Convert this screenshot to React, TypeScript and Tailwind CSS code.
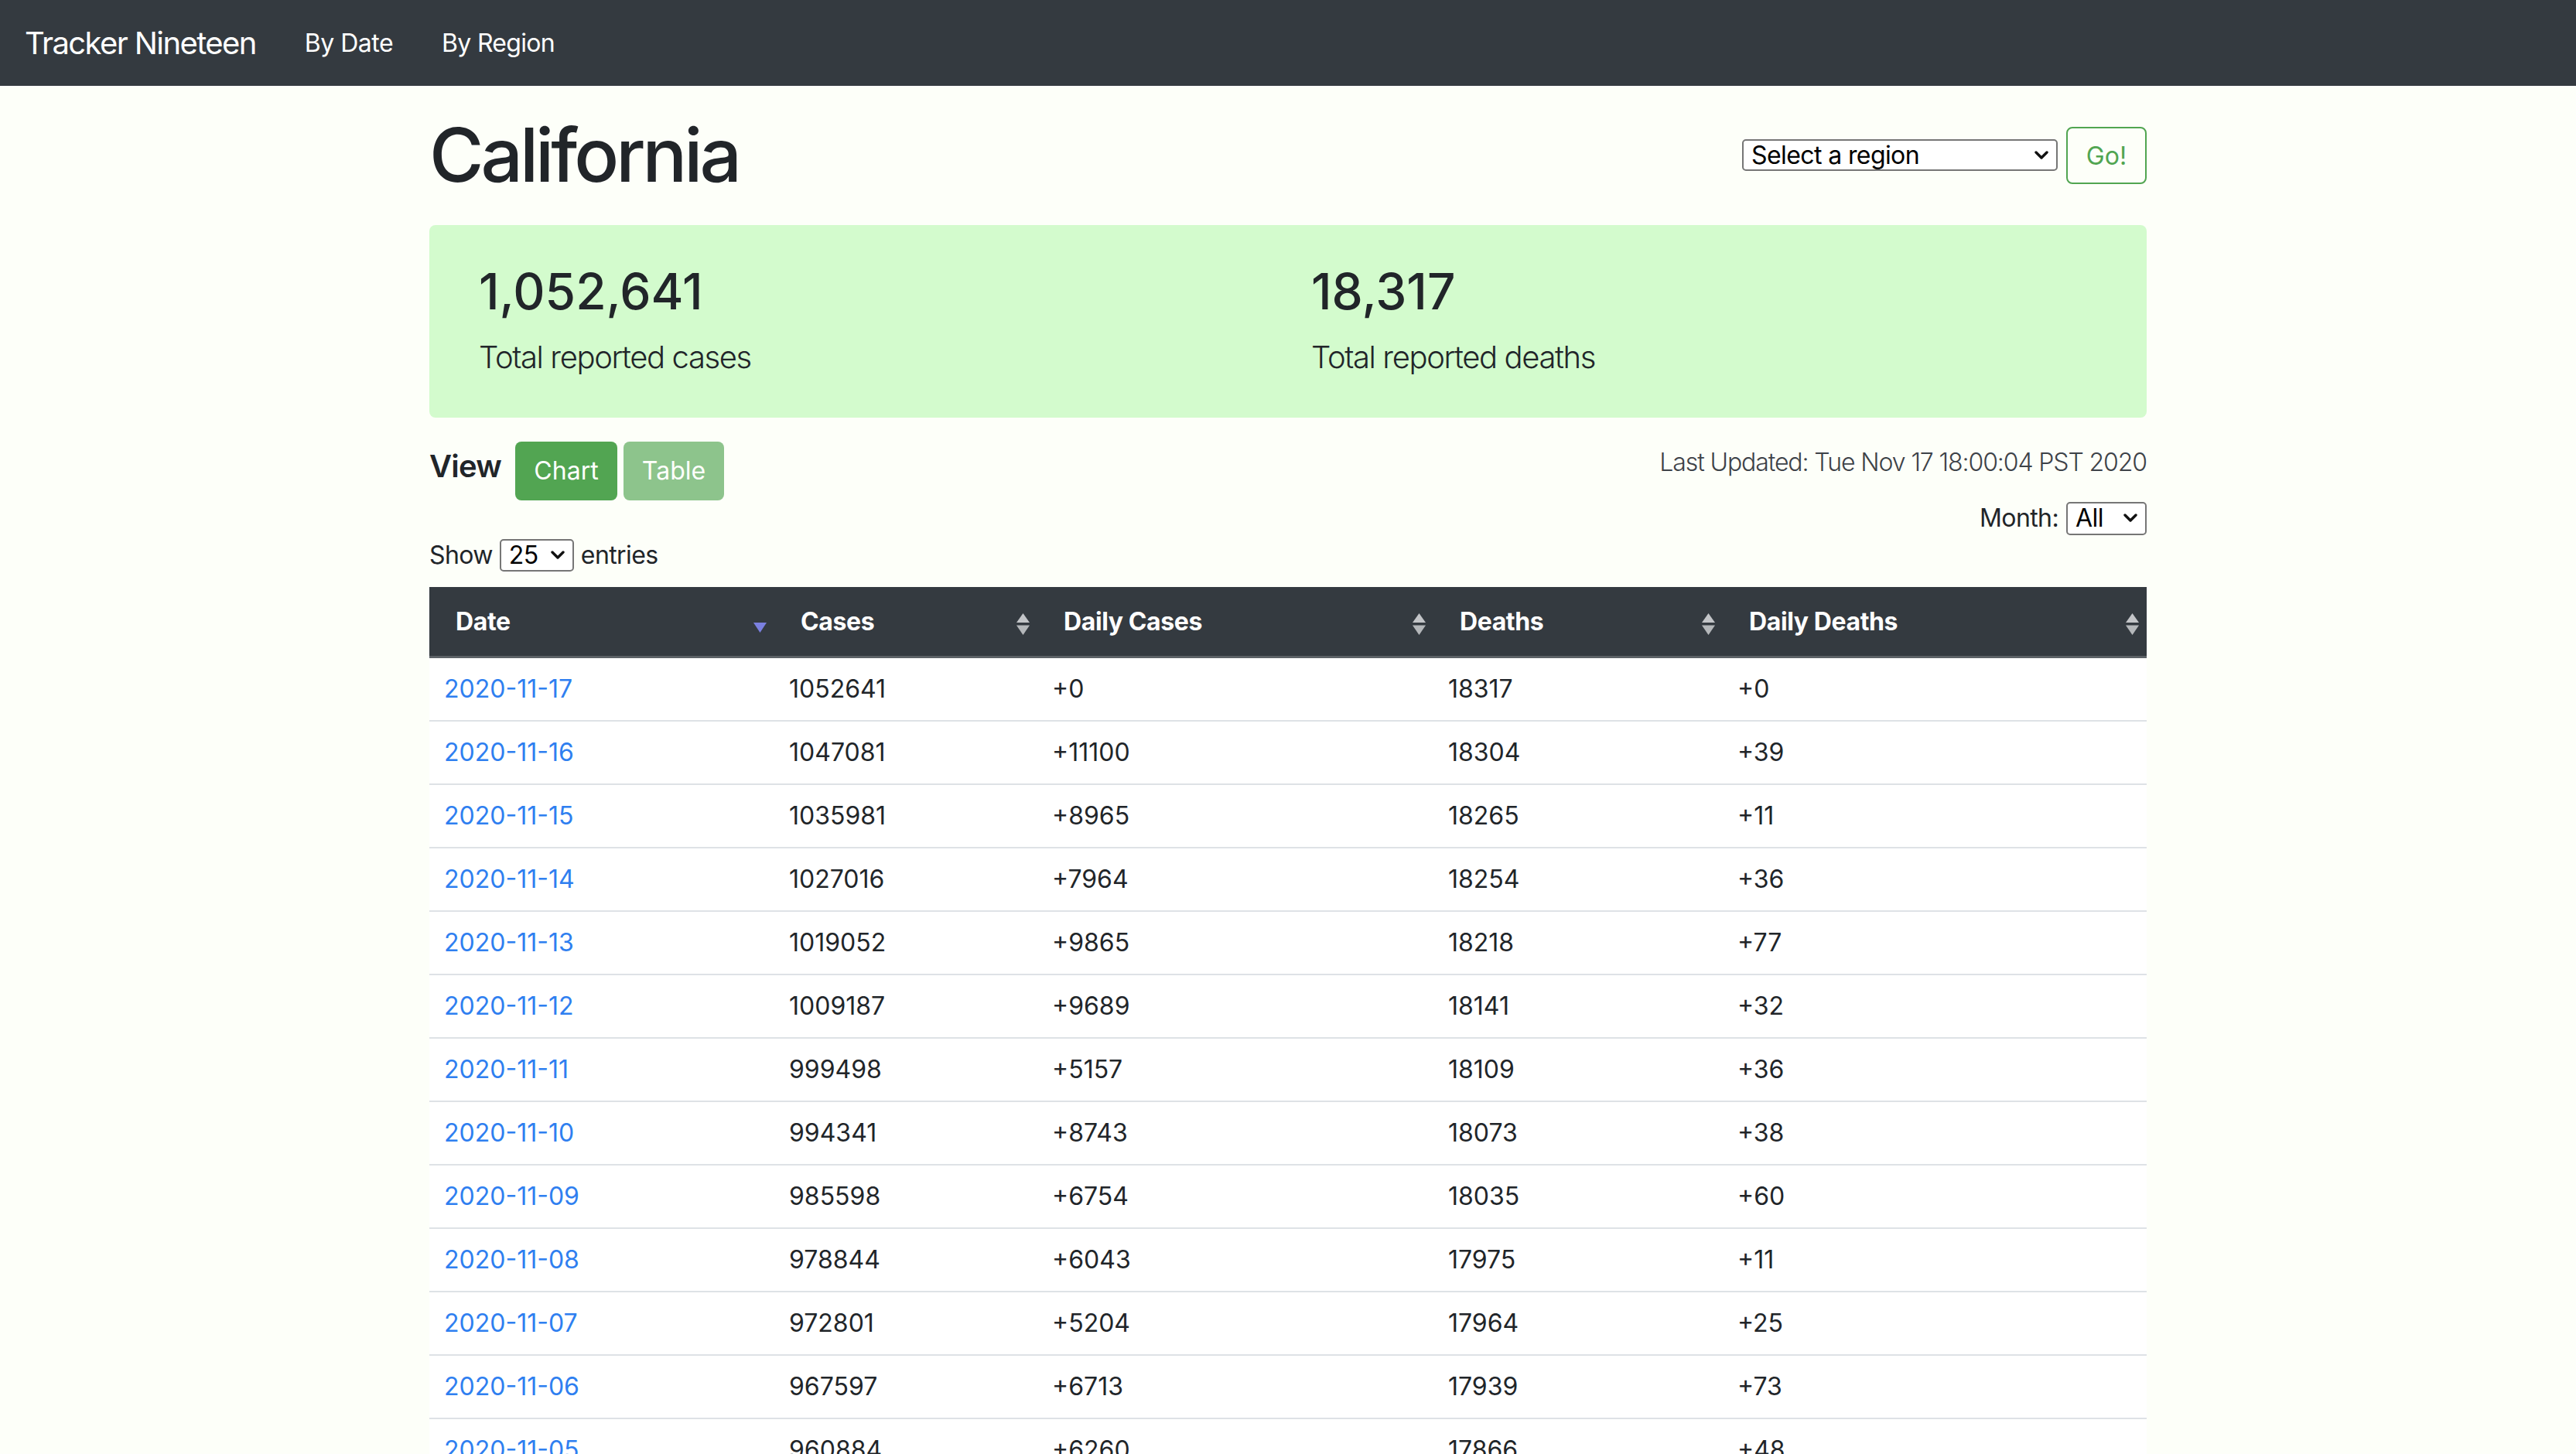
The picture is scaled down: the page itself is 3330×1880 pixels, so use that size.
import React from 'react';

// rows currently on screen, newest first
const ROWS: string[][] = [
    ['2020-11-17', '1052641', '+0', '18317', '+0'],
    ['2020-11-16', '1047081', '+11100', '18304', '+39'],
    ['2020-11-15', '1035981', '+8965', '18265', '+11'],
    ['2020-11-14', '1027016', '+7964', '18254', '+36'],
    ['2020-11-13', '1019052', '+9865', '18218', '+77'],
    ['2020-11-12', '1009187', '+9689', '18141', '+32'],
    ['2020-11-11', '999498', '+5157', '18109', '+36'],
    ['2020-11-10', '994341', '+8743', '18073', '+38'],
    ['2020-11-09', '985598', '+6754', '18035', '+60'],
    ['2020-11-08', '978844', '+6043', '17975', '+11'],
    ['2020-11-07', '972801', '+5204', '17964', '+25'],
    ['2020-11-06', '967597', '+6713', '17939', '+73'],
    ['2020-11-05', '960884', '+6260', '17866', '+48'],
];

const COLUMNS = [
    { label: 'Date', width: 'w-[446px]', sorted: true },
    { label: 'Cases', width: 'w-[340px]', sorted: false },
    { label: 'Daily Cases', width: 'w-[512px]', sorted: false },
    { label: 'Deaths', width: 'w-[374px]', sorted: false },
    { label: 'Daily Deaths', width: 'w-[548px]', sorted: false },
];

const SortIcon: React.FC<{ sorted: boolean }> = ({ sorted }) => {
    if (sorted) {
        return (
            <svg width="17" height="13" viewBox="0 0 17 13" className="translate-y-[8px]">
                <path d="M0 0 L17 0 L8.5 13 Z" fill="#7b80e0" />
            </svg>
        );
    }
    return (
        <svg width="17" height="28" viewBox="0 0 17 28" className="translate-y-[3px]">
            <path d="M8.5 0 L17 12 L0 12 Z" fill="#c3c5c8" />
            <path d="M0 15.5 L17 15.5 L8.5 28 Z" fill="#b4b7ba" />
        </svg>
    );
};

const Chevron: React.FC = () => (
    <svg width="18" height="12" viewBox="0 0 18 12">
        <polyline points="2,2 9,9 16,2" fill="none" stroke="#111" strokeWidth="3.4" strokeLinecap="round" strokeLinejoin="round" />
    </svg>
);

const FakeSelect: React.FC<{ value: string; className: string }> = ({ value, className }) => (
    <div className={`flex items-center justify-between bg-white border-2 border-[#767676] rounded-[5px] pl-[10px] pr-[10px] text-[32px] text-black leading-none tracking-[-0.6px] ${className}`}>
        <span>{value}</span>
        <Chevron />
    </div>
);

const App: React.FC = () => {
    return (
        <div className="h-[1880px] overflow-hidden bg-[#fdfff9] text-[#212529] font-['Inter','Liberation_Sans',sans-serif]">
            {/* navbar */}
            <nav className="h-[111px] bg-[#343a40] flex items-center px-[32px] gap-[63px] text-white">
                <span className="text-[40px] tracking-[-1.6px]">Tracker Nineteen</span>
                <span className="text-[32px] tracking-[-0.5px]">By Date</span>
                <span className="text-[32px] tracking-[-0.7px]">By Region</span>
            </nav>

            <main className="w-[2220px] mx-auto">
                {/* title + region picker */}
                <div className="flex items-center justify-between mt-[32px]">
                    <h1 className="text-[96px] font-medium leading-[1.2] tracking-[-4px]">California</h1>
                    <div className="flex items-center gap-[11px]">
                        <FakeSelect value="Select a region" className="w-[408px] h-[41px]" />
                        <button className="w-[104px] h-[74px] pt-[3px] rounded-[8px] border-2 border-[#51a551] text-[#51a551] text-[32px]">
                            Go!
                        </button>
                    </div>
                </div>

                {/* totals */}
                <div className="mt-[33px] rounded-[8px] bg-[#d3fbcd] px-[64px] py-[48px] grid grid-cols-2 gap-x-[60px]">
                    <div>
                        <div className="text-[64px] font-medium leading-[1.2] mb-[16px]">1,052,641</div>
                        <div className="text-[40px] font-light leading-[1.5] tracking-[-1.4px]">Total reported cases</div>
                    </div>
                    <div>
                        <div className="text-[64px] font-medium leading-[1.2] mb-[16px]">18,317</div>
                        <div className="text-[40px] font-light leading-[1.5] tracking-[-1.4px]">Total reported deaths</div>
                    </div>
                </div>

                {/* view switch + meta */}
                <div className="mt-[31px] flex justify-between items-start">
                    <div className="flex items-start">
                        <span className="text-[40px] font-semibold leading-[1.2] mt-[8px] mr-[18px] tracking-[-0.8px]">View</span>
                        <button className="w-[132px] h-[76px] rounded-[8px] bg-[#52a552] text-white text-[32px]">Chart</button>
                        <button className="w-[130px] h-[76px] ml-[8px] rounded-[8px] bg-[#52a552] text-white text-[32px] opacity-65">Table</button>
                    </div>
                    <div className="flex flex-col items-end">
                        <div className="mt-[3px] text-[32px] font-light leading-[1.5] text-[#3d4248] tracking-[-1.1px]">
                            Last Updated: Tue Nov 17 18:00:04 PST 2020
                        </div>
                        <div className="mt-[27px] flex items-center gap-[10px] h-[43px]">
                            <span className="text-[32px] tracking-[-0.6px]">Month:</span>
                            <FakeSelect value="All" className="w-[104px] h-[43px]" />
                        </div>
                    </div>
                </div>

                <div className="mt-[2px] flex items-center gap-[9px] text-[32px] leading-[1.5] tracking-[-0.6px]">
                    <span>Show</span>
                    <FakeSelect value="25" className="w-[96px] h-[42px]" />
                    <span>entries</span>
                </div>

                {/* data table */}
                <table className="mt-[17px] w-full border-collapse table-fixed">
                    <thead>
                        <tr className="bg-[#343a40] text-white border-b-[3px] border-[#5c6166]">
                            {COLUMNS.map(col => (
                                <th key={col.label} className={`${col.width} h-[91px] p-0 text-left`}>
                                    <div className="flex items-center justify-between pl-[34px] pr-[10px] text-[32px] font-bold tracking-[-0.4px]">
                                        <span>{col.label}</span>
                                        <SortIcon sorted={col.sorted} />
                                    </div>
                                </th>
                            ))}
                        </tr>
                    </thead>
                    <tbody className="bg-white">
                        {ROWS.map((row, i) => (
                            <tr key={row[0]} className={i === 0 ? '' : 'border-t-2 border-[#dee2e6]'}>
                                {row.map((cell, j) => (
                                    <td key={j} className={`px-[19px] py-[16px] text-[32px] leading-[48px] ${j === 0 ? 'text-[#2f7ff0]' : ''}`}>
                                        {cell}
                                    </td>
                                ))}
                            </tr>
                        ))}
                    </tbody>
                </table>
            </main>
        </div>
    );
};

export default App;
